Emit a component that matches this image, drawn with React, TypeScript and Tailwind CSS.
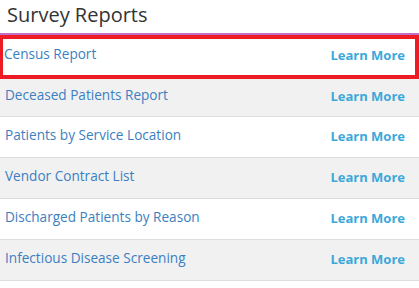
const reports = [
  "Census Report",
  "Deceased Patients Report",
  "Patients by Service Location",
  "Vendor Contract List",
  "Discharged Patients by Reason",
  "Infectious Disease Screening",
];

const Row = ({ name, index }: { name: string; index: number }) => {
  const first = index === 0;
  const shaded = index % 2 === 1;
  const base = "flex items-center justify-between";
  const cls = first
    ? `${base} h-[44px] border-[4px] border-l-[3px] border-[#ed1c24] bg-white pl-[1px] pr-[10px] pb-[2px]`
    : index === 1
    ? `${base} h-[38px] border-b border-[#dddddd] pl-[5px] pr-[14px] pb-[2px] ${shaded ? "bg-[#f1f1f1]" : "bg-white"}`
    : `${base} h-[41px] border-b border-[#dddddd] pl-[5px] pr-[14px] ${shaded ? "bg-[#f1f1f1]" : "bg-white"}`;

  return (
    <div className={cls}>
      <a className="text-[13.6px] text-[#3c7fc1] -mt-[3px]">{name}</a>
      <a className="text-[13px] font-bold text-[#3ba8da]">Learn More</a>
    </div>
  );
};

export default function App() {
  return (
    <div
      className="w-[419px] h-[288px] overflow-hidden bg-white"
      style={{ fontFamily: '"Open Sans", sans-serif' }}
    >
      <h2 className="h-[33px] pl-[7px] pt-[1px] text-[20px] leading-[28px] text-[#333333]">
        Survey Reports
      </h2>
      <div className="h-[2px] bg-[#c071c7]" />
      {reports.map((r, i) => (
        <Row key={r} name={r} index={i} />
      ))}
    </div>
  );
}
